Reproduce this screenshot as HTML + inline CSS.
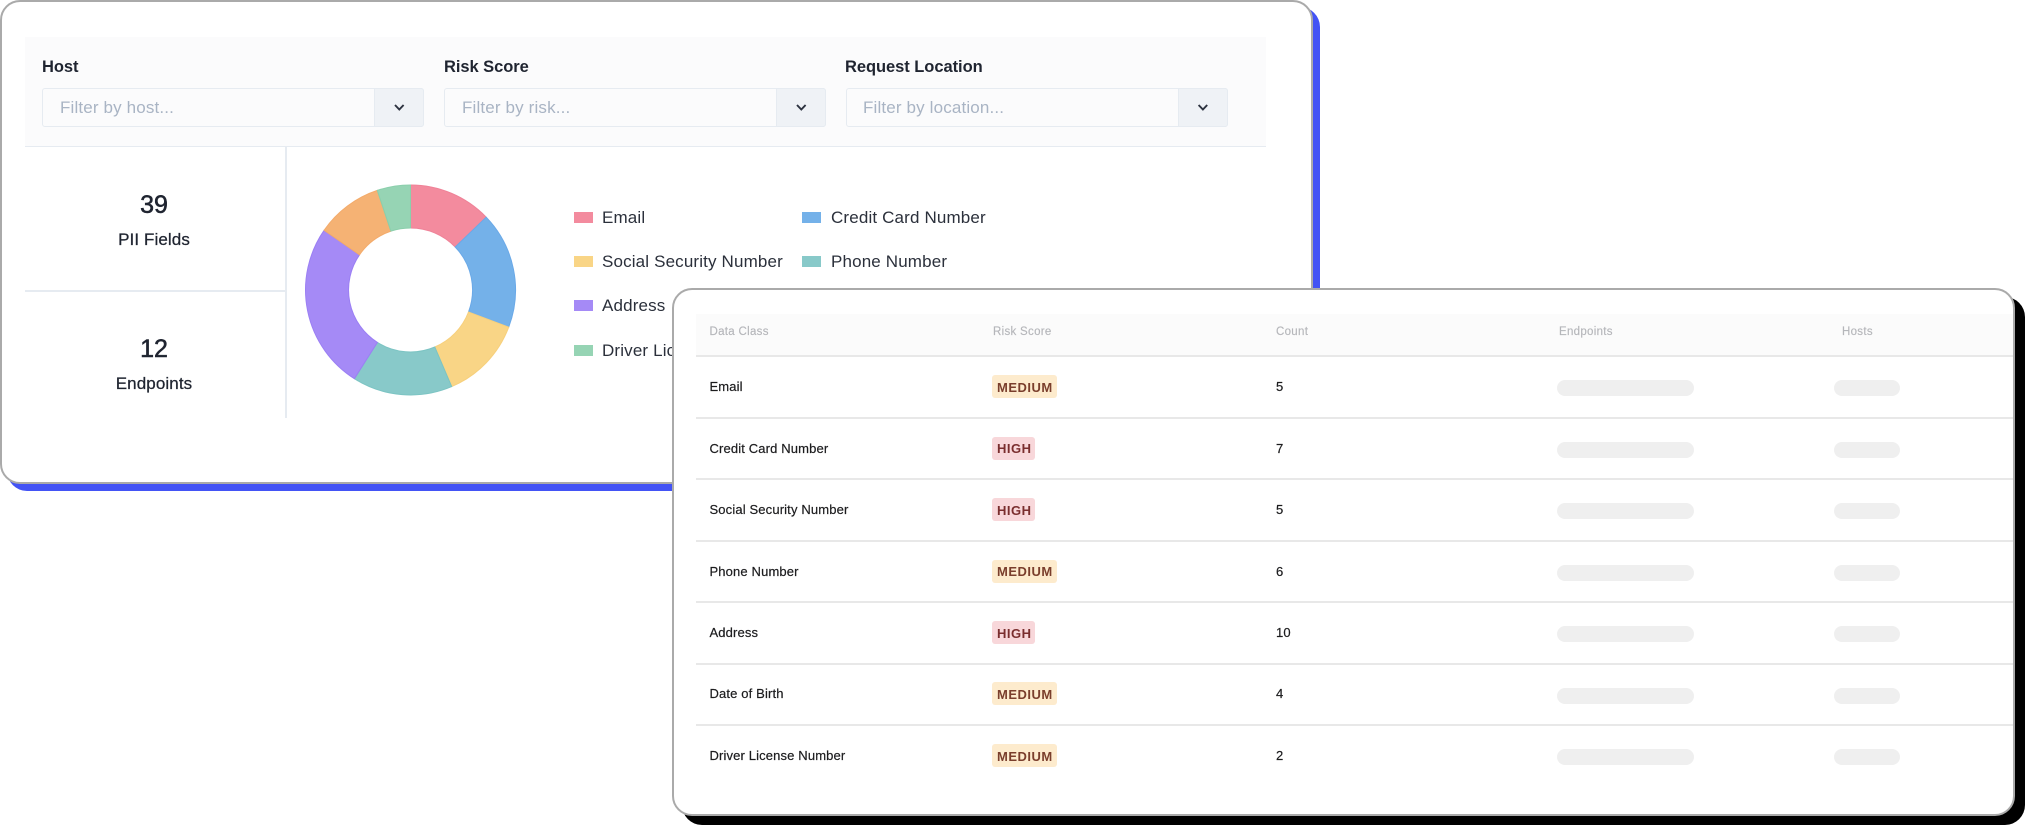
<!DOCTYPE html>
<html lang="en">
<head>
<meta charset="utf-8">
<title>PII Dashboard</title>
<style>
html,body{margin:0;padding:0;background:#fff}
body{position:relative;width:2025px;height:825px;overflow:hidden;font-family:"Liberation Sans",Arial,sans-serif;color:#1f2430}
#w{position:absolute;left:0;top:0;width:2025px;height:825px;overflow:hidden;filter:blur(.35px)}
.a{position:absolute;box-sizing:border-box}
.t{position:absolute;white-space:nowrap;line-height:20px;height:20px}
.card1{left:0;top:0;width:1313px;height:484px;background:#fff;border:2px solid #aaa;border-radius:20px;box-shadow:7px 7px 0 #4353f5}
.card2{left:672px;top:288px;width:1343px;height:528px;background:#fff;border:2px solid #aaa;border-radius:20px;box-shadow:10px 9px 0 #000}
.lab{font-size:16.5px;font-weight:700;letter-spacing:-.05px;color:#1f2430}
.inp{height:39px;width:382px;top:88px;background:#fbfbfc;border:1.5px solid #e6ebf1;border-radius:3px}
.btn{height:39px;width:50px;top:88px;background:#eff2f6;border:1.5px solid #e6ebf1;border-left:1.5px solid #e6ebf1;border-radius:0 3px 3px 0}
.ph{font-size:17px;letter-spacing:.15px;color:#a9b4c4;top:98px}
.num{font-size:25px;font-weight:400;width:120px;text-align:center;left:94px;color:#1f2430;-webkit-text-stroke:.55px #1f2430}
.sub{font-size:17px;width:200px;text-align:center;left:54px;letter-spacing:.1px;color:#1f2430;-webkit-text-stroke:.25px #1f2430}
.sw{width:19px;height:11px}
.lg{font-size:17px;letter-spacing:.15px;color:#2b303b}
.th{font-size:11.5px;letter-spacing:.3px;color:#b5b6ba;top:322px;-webkit-text-stroke:.15px #b5b6ba}
.td{font-size:13px;letter-spacing:.14px;color:#1c1c1e;-webkit-text-stroke:.2px #1c1c1e}
.badge{height:23px;border-radius:3px}
.bt{font-size:13px;font-weight:700;letter-spacing:.5px}
.m{background:#fdebcd}
.h{background:#f8d7da}
.mt{color:#7a3e2c}
.ht{color:#7a2e2e}
.ln{left:696px;width:1317px;height:1.5px;background:#e8e8e8}
.p1{left:1557px;width:137px;height:16px;border-radius:8px;background:#efefef}
.p2{left:1834px;width:66px;height:16px;border-radius:8px;background:#efefef}
</style>
</head>
<body>
<div id="w">
<div class="a card1"></div>

<div class="a" style="left:25px;top:37px;width:1241px;height:110px;background:#fbfbfc;border-bottom:1.5px solid #e6ebf1"></div>

<div class="t lab" style="left:42px;top:57px">Host</div>
<div class="t lab" style="left:444px;top:57px">Risk Score</div>
<div class="t lab" style="left:845px;top:57px">Request Location</div>

<div class="a inp" style="left:42px"></div>
<div class="a btn" style="left:374px"></div>
<div class="a inp" style="left:444px"></div>
<div class="a btn" style="left:776px"></div>
<div class="a inp" style="left:845.5px"></div>
<div class="a btn" style="left:1178px"></div>

<div class="t ph" style="left:60px">Filter by host...</div>
<div class="t ph" style="left:462px">Filter by risk...</div>
<div class="t ph" style="left:863px">Filter by location...</div>

<svg class="a" style="left:0;top:0" width="2025" height="825" viewBox="0 0 2025 825" fill="none">
  <g stroke="#2d3340" stroke-width="1.9" fill="none">
    <path d="M395 105 L399.3 109.5 L403.6 105"/>
    <path d="M797 105 L801.3 109.5 L805.6 105"/>
    <path d="M1198.6 105 L1202.9 109.5 L1207.2 105"/>
  </g>
  <g stroke-width="1" transform="translate(-.5 0)">
    <path d="M411 185A105 105 0 0 1 486.7 217.2L455.7 247A62 62 0 0 0 411 228Z" fill="#f38b9e" stroke="#ef8298"/>
    <path d="M486.7 217.2A105 105 0 0 1 509.2 327.2L469 312A62 62 0 0 0 455.7 247Z" fill="#74b1e9" stroke="#6aa9e8"/>
    <path d="M509.2 327.2A105 105 0 0 1 452.2 386.6L435.3 347A62 62 0 0 0 469 312Z" fill="#f9d586" stroke="#f7d07c"/>
    <path d="M452.2 386.6A105 105 0 0 1 354.9 378.7L377.9 342.4A62 62 0 0 0 435.3 347Z" fill="#88c9c9" stroke="#7cc4c3"/>
    <path d="M354.9 378.7A105 105 0 0 1 324.6 230.3L360 254.8A62 62 0 0 0 377.9 342.4Z" fill="#a58af6" stroke="#9b7ff4"/>
    <path d="M324.6 230.3A105 105 0 0 1 377.8 190.4L391.4 231.2A62 62 0 0 0 360 254.8Z" fill="#f5b274" stroke="#f3ab6b"/>
    <path d="M377.8 190.4A105 105 0 0 1 411 185L411 228A62 62 0 0 0 391.4 231.2Z" fill="#96d4b4" stroke="#8bcfac"/>
  </g>
</svg>

<div class="a" style="left:285px;top:147px;width:1.5px;height:271px;background:#e6ebf1"></div>
<div class="a" style="left:25px;top:290px;width:260px;height:1.5px;background:#e6ebf1"></div>

<div class="t num" style="top:195px">39</div>
<div class="t sub" style="top:230px">PII Fields</div>
<div class="t num" style="top:339px">12</div>
<div class="t sub" style="top:374px">Endpoints</div>

<div class="a sw" style="left:573.5px;top:212px;background:#f38b9e"></div>
<div class="a sw" style="left:573.5px;top:256px;background:#f9d586"></div>
<div class="a sw" style="left:573.5px;top:300px;background:#a58af6"></div>
<div class="a sw" style="left:573.5px;top:344.5px;background:#96d4b4"></div>
<div class="a sw" style="left:802px;top:212px;background:#74b1e9"></div>
<div class="a sw" style="left:802px;top:256px;background:#88c9c9"></div>

<div class="t lg" style="left:602px;top:208px">Email</div>
<div class="t lg" style="left:602px;top:252px">Social Security Number</div>
<div class="t lg" style="left:602px;top:296px">Address</div>
<div class="t lg" style="left:602px;top:340.5px">Driver License Number</div>
<div class="t lg" style="left:831px;top:208px">Credit Card Number</div>
<div class="t lg" style="left:831px;top:252px">Phone Number</div>

<div class="a card2"></div>
<div class="a" style="left:696px;top:314px;width:1317px;height:42px;background:#fbfbfb"></div>

<div class="t th" style="left:709.5px">Data Class</div>
<div class="t th" style="left:993px">Risk Score</div>
<div class="t th" style="left:1276px">Count</div>
<div class="t th" style="left:1559px">Endpoints</div>
<div class="t th" style="left:1842px">Hosts</div>

<div class="a ln" style="top:355px"></div>
<div class="a ln" style="top:417px"></div>
<div class="a ln" style="top:478px"></div>
<div class="a ln" style="top:540px"></div>
<div class="a ln" style="top:601px"></div>
<div class="a ln" style="top:663px"></div>
<div class="a ln" style="top:724px"></div>

<div class="t td" style="left:709.5px;top:377px">Email</div>
<div class="t td" style="left:709.5px;top:438.5px">Credit Card Number</div>
<div class="t td" style="left:709.5px;top:500px">Social Security Number</div>
<div class="t td" style="left:709.5px;top:561.5px">Phone Number</div>
<div class="t td" style="left:709.5px;top:623px">Address</div>
<div class="t td" style="left:709.5px;top:684px">Date of Birth</div>
<div class="t td" style="left:709.5px;top:745.5px">Driver License Number</div>

<div class="a badge m" style="left:992px;top:375px;width:65px"></div>
<div class="t bt mt" style="left:997px;top:378px">MEDIUM</div>
<div class="a badge h" style="left:992px;top:436.5px;width:43px"></div>
<div class="t bt ht" style="left:997px;top:439px">HIGH</div>
<div class="a badge h" style="left:992px;top:498px;width:43px"></div>
<div class="t bt ht" style="left:997px;top:500.5px">HIGH</div>
<div class="a badge m" style="left:992px;top:559.5px;width:65px"></div>
<div class="t bt mt" style="left:997px;top:562px">MEDIUM</div>
<div class="a badge h" style="left:992px;top:621px;width:43px"></div>
<div class="t bt ht" style="left:997px;top:623.5px">HIGH</div>
<div class="a badge m" style="left:992px;top:682px;width:65px"></div>
<div class="t bt mt" style="left:997px;top:685px">MEDIUM</div>
<div class="a badge m" style="left:992px;top:744px;width:65px"></div>
<div class="t bt mt" style="left:997px;top:746.5px">MEDIUM</div>

<div class="t td" style="left:1276px;top:377px">5</div>
<div class="t td" style="left:1276px;top:438.5px">7</div>
<div class="t td" style="left:1276px;top:500px">5</div>
<div class="t td" style="left:1276px;top:561.5px">6</div>
<div class="t td" style="left:1276px;top:623px">10</div>
<div class="t td" style="left:1276px;top:684px">4</div>
<div class="t td" style="left:1276px;top:745.5px">2</div>

<div class="a p1" style="top:380px"></div><div class="a p2" style="top:380px"></div>
<div class="a p1" style="top:441.5px"></div><div class="a p2" style="top:441.5px"></div>
<div class="a p1" style="top:503px"></div><div class="a p2" style="top:503px"></div>
<div class="a p1" style="top:564.5px"></div><div class="a p2" style="top:564.5px"></div>
<div class="a p1" style="top:626px"></div><div class="a p2" style="top:626px"></div>
<div class="a p1" style="top:687.5px"></div><div class="a p2" style="top:687.5px"></div>
<div class="a p1" style="top:749px"></div><div class="a p2" style="top:749px"></div>
</div>
</body>
</html>
